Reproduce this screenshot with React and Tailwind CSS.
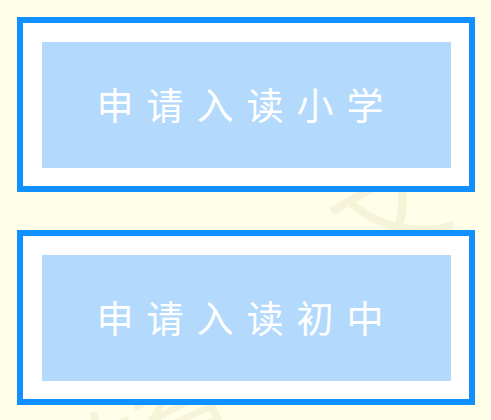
const options = ["申请入读小学", "申请入读初中"];

export default function App() {
  return (
    <div className="relative w-[491px] h-[420px] overflow-hidden bg-[#fffee8]" style={{ fontFamily: '"Noto Sans CJK SC", "Noto Sans", sans-serif' }}>
      {/* faint background watermark */}
      <div aria-hidden="true" className="pointer-events-none absolute left-[330px] top-[150px] -rotate-[30deg] text-[110px] leading-none text-[#f5f3d8] whitespace-nowrap select-none">
        文
      </div>
      <div aria-hidden="true" className="pointer-events-none absolute left-[40px] top-[385px] -rotate-[25deg] text-[100px] leading-none text-[#f5f3d8] whitespace-nowrap select-none">
        教育
      </div>

      <div className="relative flex flex-col gap-[38px] pt-[17px] pl-[17px]">
        {options.map((label) => (
          <button
            key={label}
            className="w-[458px] h-[175px] border-[6px] border-[#1190ff] bg-white pt-[19px] pl-[19px] pr-[18px] pb-[18px]"
          >
            <div className="flex h-full w-full items-center justify-center bg-[#b3d9fd] text-[37px] tracking-[13px] text-white">
              {label}
            </div>
          </button>
        ))}
      </div>
    </div>
  );
}
